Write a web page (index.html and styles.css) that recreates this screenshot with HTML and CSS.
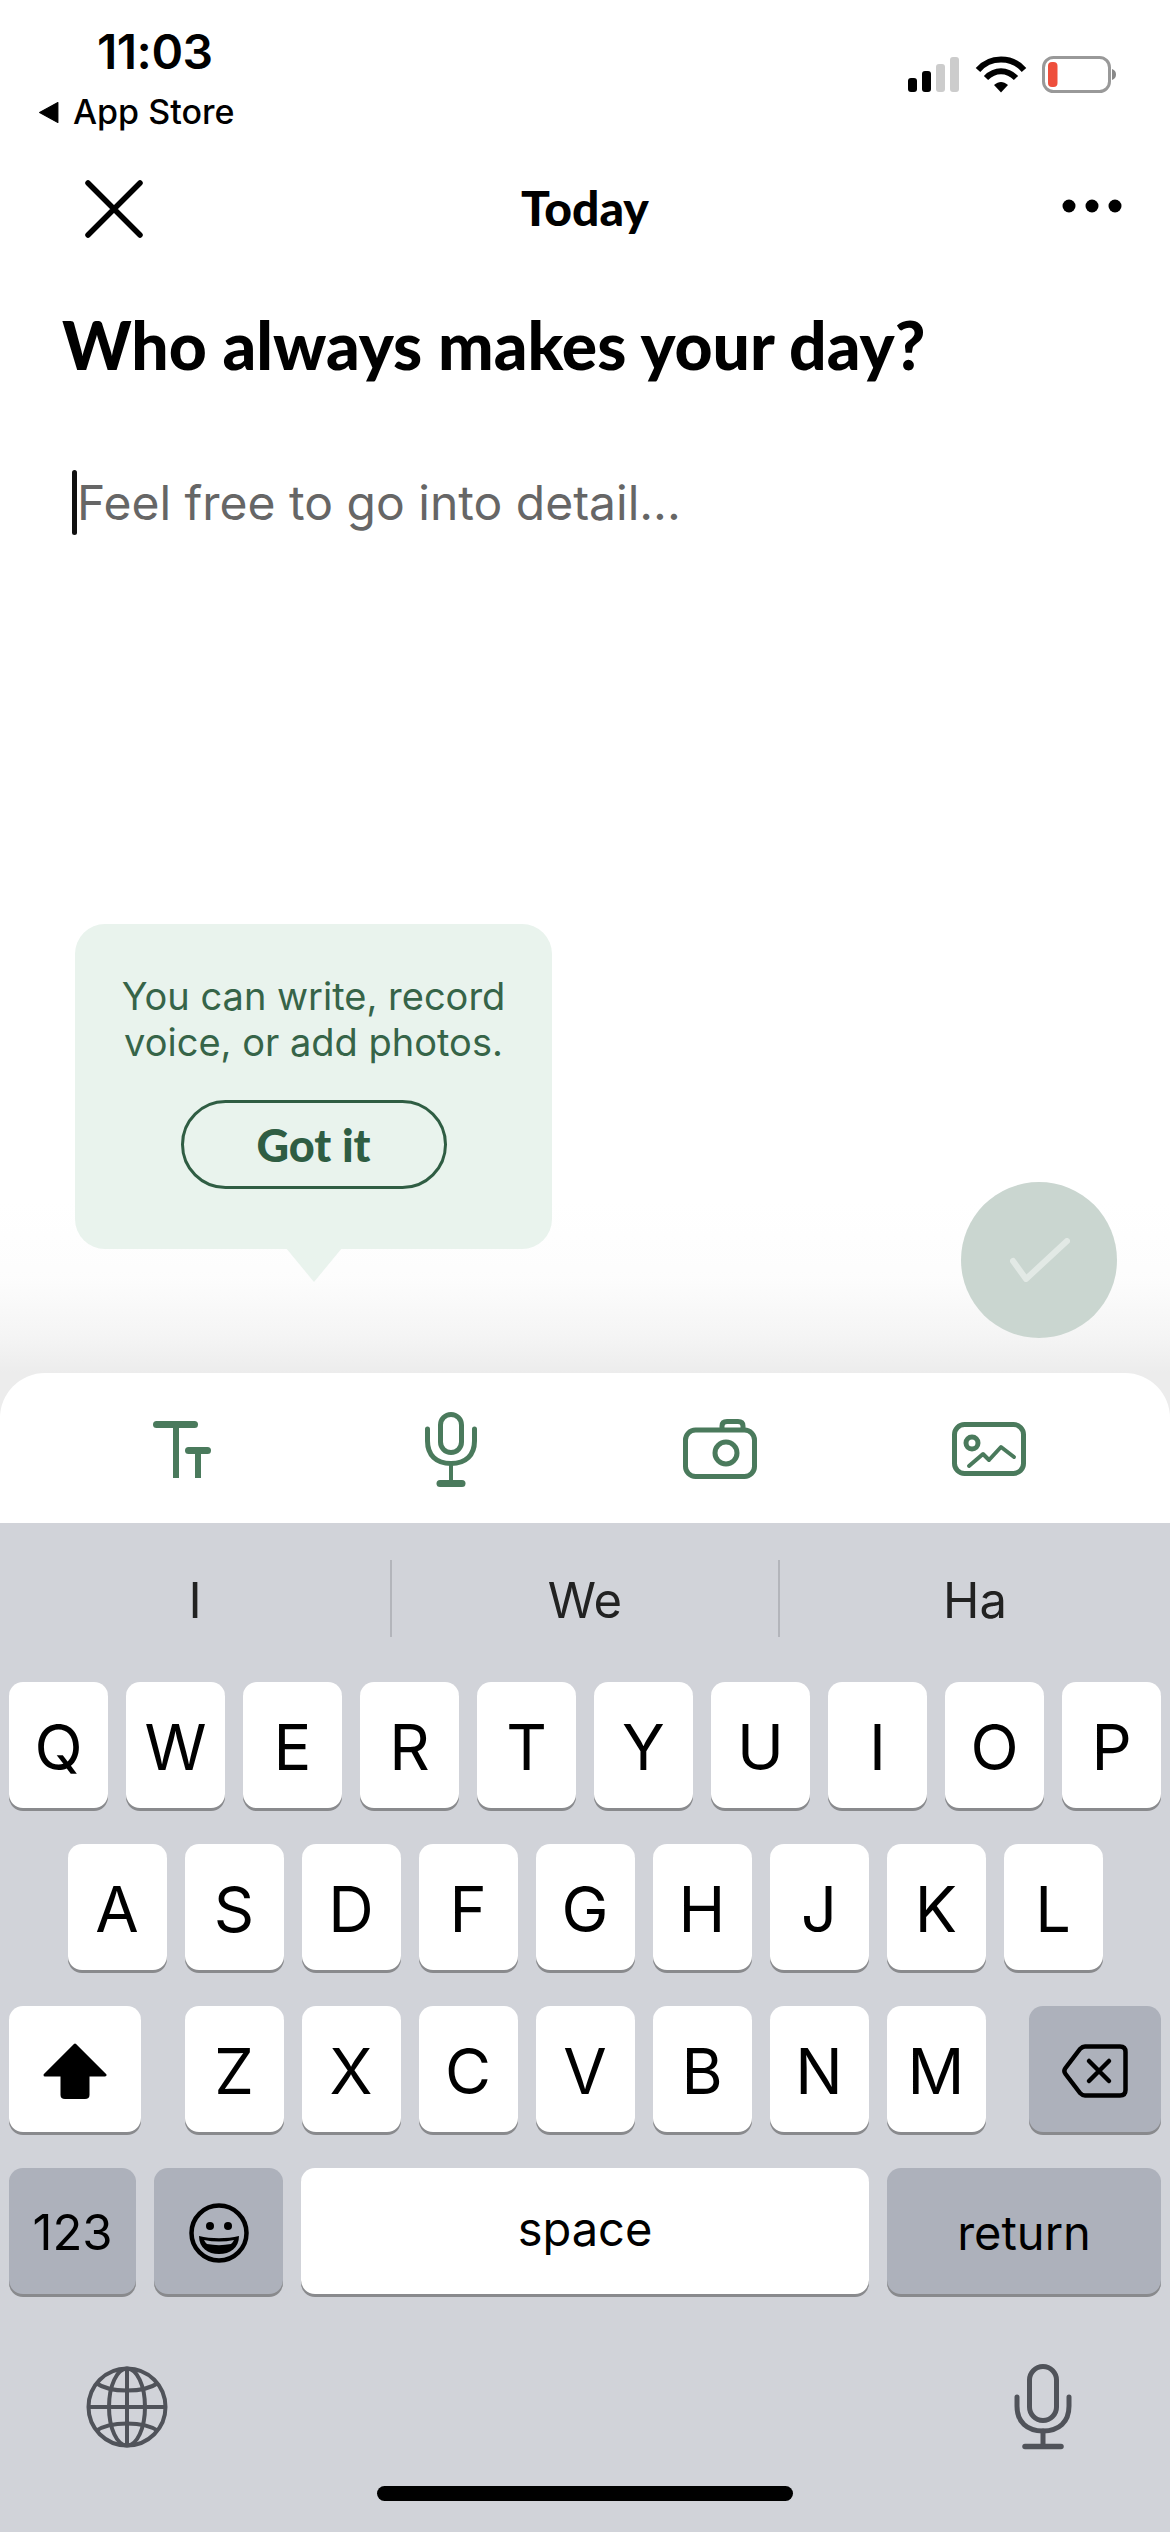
FILE: index.html
```html
<!DOCTYPE html>
<html lang="en">
<head>
<meta charset="utf-8">
<title>Today</title>
<link rel="stylesheet" href="styles.css">
</head>
<body>
<div class="phone">
  <header class="status">
    <div class="status-left">
      <div class="time">11:03</div>
      <div class="back"><svg class="back-tri" viewBox="0 0 20 22"><path d="M19 1.500V20.500L1.500 11Z" fill="#000" stroke="#000" stroke-width="1" stroke-linejoin="round"/></svg>App Store</div>
    </div>
    <svg class="status-icons" viewBox="0 0 208 40">
      <g>
        <rect x="0" y="22" width="9" height="14" rx="3" fill="#000"/>
        <rect x="14" y="15" width="9" height="21" rx="3" fill="#000"/>
        <rect x="28" y="8" width="9" height="28" rx="3" fill="#ccc"/>
        <rect x="42" y="1" width="9" height="35" rx="3" fill="#ccc"/>
      </g>
      <g fill="none" stroke="#000" stroke-width="6">
        <path d="M70 14C82 0 104 0 116 14"/>
        <path d="M78 22C87 13 99 13 108 22"/>
      </g>
      <path d="M86 29C91 25 95 25 100 29L93 36.500Z" fill="#000"/>
      <rect x="135.500" y="1.500" width="66" height="34" rx="10" fill="#fff" stroke="#999" stroke-width="3"/>
      <rect x="140" y="6" width="9.500" height="25" rx="4" fill="#ee4f3c"/>
      <path d="M204 13C207 14 208 16 208 18.500C208 21 207 23 204 24Z" fill="#888"/>
    </svg>
  </header>

  <nav class="nav">
    <svg class="nav-x" viewBox="0 0 58 58"><path d="M3 3L55 55M55 3L3 55" stroke="#000" stroke-width="5.500" stroke-linecap="round"/></svg>
    <div class="nav-title">Today</div>
    <svg class="nav-more" viewBox="0 0 60 14"><circle cx="7" cy="7" r="6.500"/><circle cx="30" cy="7" r="6.500"/><circle cx="53" cy="7" r="6.500"/></svg>
  </nav>

  <main class="main">
    <h1 class="prompt">Who always makes your day?</h1>
    <div class="entry"><span class="caret"></span><span class="placeholder">Feel free to go into detail...</span></div>

    <div class="tip">
      <p class="tip-text">You can write, record<br>voice, or add photos.</p>
      <button class="tip-btn">Got it</button>
    </div>

    <div class="done">
      <svg class="done-check" viewBox="0 0 60 44"><path d="M3 23L16 41L57 3" fill="none" stroke="#e2e9e5" stroke-width="6" stroke-linecap="round" stroke-linejoin="round"/></svg>
    </div>
  </main>

  <section class="tools">
    <div class="tool">
      <svg class="ic" width="58" height="57" viewBox="0 0 58 57"><g fill="none" stroke="#4a7a5c" stroke-width="6"><path d="M3.500 3.500H41.500" stroke-linecap="round" stroke-width="7"/><path d="M23 3.500V57"/><path d="M35.500 29.500H54.500" stroke-linecap="round" stroke-width="7"/><path d="M45 29.500V57"/></g></svg>
    </div>
    <div class="tool">
      <svg class="ic" width="52" height="75" viewBox="0 0 52 75"><g fill="none" stroke="#4a7a5c" stroke-width="5"><rect x="15.500" y="2.500" width="21" height="38" rx="10.500"/><path d="M2.500 17V29C2.500 43 11 51.500 26 51.500C41 51.500 49.500 43 49.500 29V17" stroke-linecap="round"/><path d="M26 51.500V71" stroke-width="4"/><path d="M15 71.500H37" stroke-width="7" stroke-linecap="round"/></g></svg>
    </div>
    <div class="tool">
      <svg class="ic" width="74" height="60" viewBox="0 0 74 60"><g fill="none" stroke="#4a7a5c" stroke-width="5"><rect x="2.500" y="11" width="69" height="46.500" rx="10"/><path d="M39 11V7C39 4 41 2.500 44 2.500H55C58 2.500 60 4 60 7V11"/><circle cx="43" cy="34" r="11"/></g></svg>
    </div>
    <div class="tool">
      <svg class="ic" width="74" height="54" viewBox="0 0 74 54"><g fill="none" stroke="#4a7a5c" stroke-width="5"><rect x="2.500" y="2.500" width="69" height="49" rx="10"/><ellipse cx="20" cy="21" rx="6" ry="6"/><path d="M17 44L31 32L37 38L49 25L62 35" stroke-width="4" stroke-linecap="round" stroke-linejoin="round"/></g></svg>
    </div>
  </section>

  <section class="kb">
    <div class="suggest">
      <div class="sug">I</div>
      <div class="sug sug-mid">We</div>
      <div class="sug">Ha</div>
    </div>
    <div class="rows">
      <div class="row">
        <div class="key">Q</div><div class="key">W</div><div class="key">E</div><div class="key">R</div><div class="key">T</div><div class="key">Y</div><div class="key">U</div><div class="key">I</div><div class="key">O</div><div class="key">P</div>
      </div>
      <div class="row">
        <div class="key">A</div><div class="key">S</div><div class="key">D</div><div class="key">F</div><div class="key">G</div><div class="key">H</div><div class="key">J</div><div class="key">K</div><div class="key">L</div>
      </div>
      <div class="row row-3">
        <div class="key key-wide">
          <svg width="64" height="56" viewBox="0 0 64 56"><path d="M32 2L62 32H45V52C45 53.500 44 54.500 42 54.500H22C20 54.500 19 53.500 19 52V32H2Z" fill="#000" stroke="#000" stroke-width="3" stroke-linejoin="round"/></svg>
        </div>
        <div class="letters">
          <div class="key">Z</div><div class="key">X</div><div class="key">C</div><div class="key">V</div><div class="key">B</div><div class="key">N</div><div class="key">M</div>
        </div>
        <div class="key key-wide key-gray">
          <svg width="66" height="54" viewBox="0 0 66 54"><g fill="none" stroke="#000" stroke-width="4.500" stroke-linecap="round" stroke-linejoin="round"><path d="M23 2.500H58C61.500 2.500 63.500 4.500 63.500 8V46C63.500 49.500 61.500 51.500 58 51.500H23C21 51.500 19.500 50.500 18 49L3.500 30C2 28 2 26 3.500 24L18 5C19.500 3.500 21 2.500 23 2.500Z"/><path d="M27 17L47 37M47 17L27 37"/></g></svg>
        </div>
      </div>
      <div class="row row-4">
        <div class="key key-gray key-123">123</div>
        <div class="key key-gray key-emoji">
          <svg width="60" height="60" viewBox="0 0 60 60"><circle cx="30" cy="30" r="27.500" fill="none" stroke="#000" stroke-width="4.500"/><circle cx="21" cy="23" r="4" fill="#000"/><circle cx="39" cy="23" r="4" fill="#000"/><path d="M10 33C22 36 38 36 50 33C50 45 41 51 30 51C19 51 10 45 10 33Z" fill="#000"/><path d="M15 37C25 39 35 39 45 37C44 39 43 40 42 41C34 42.500 26 42.500 18 41C17 40 16 39 15 37Z" fill="#adb1bb"/></svg>
        </div>
        <div class="key key-space">space</div>
        <div class="key key-gray key-return">return</div>
      </div>
    </div>
    <div class="kb-bottom">
      <svg width="82" height="82" viewBox="0 0 82 82"><g fill="none" stroke="#50535a" stroke-width="4"><circle cx="41" cy="41" r="38.500"/><ellipse cx="41" cy="41" rx="18" ry="38.500"/><path d="M41 2.500V79.500M2.500 41H79.500" /><path d="M10 17C24 27 58 27 72 17M10 65C24 55 58 55 72 65"/></g></svg>
      <svg width="58" height="86" viewBox="0 0 58 86"><g fill="none" stroke="#50535a" stroke-width="5" stroke-linecap="round"><rect x="15.500" y="2.500" width="27" height="54" rx="13.500"/><path d="M3 33V42C3 58 13 67 29 67C45 67 55 58 55 42V33"/><path d="M29 67V82"/><path d="M11 82.500H47" stroke-width="5.500"/></g></svg>
    </div>
    <div class="home-wrap"><div class="home"></div></div>
  </section>
</div>
</body>
</html>
```

FILE: styles.css
```css
* { box-sizing: border-box; }
html, body { margin: 0; padding: 0; background: #fff; }
body { font-family: "Inter", "Liberation Sans", sans-serif; color: #000; }
.phone { width: 1170px; height: 2532px; display: flex; flex-direction: column; overflow: hidden; background: #fff; }

.status { height: 150px; flex: none; display: flex; justify-content: space-between; padding: 26px 54px 0 38px; }
.status-left { display: flex; flex-direction: column; }
.time { font-size: 48px; font-weight: 600; line-height: 52px; margin-left: 59px; letter-spacing: -0.5px; }
.back { display: flex; align-items: center; gap: 14px; font-size: 34px; font-weight: 500; line-height: 40px; margin-top: 14px; }
.back-tri { width: 21px; height: 23px; }
.status-icons { width: 208px; height: 40px; margin-top: 30px; }

.nav { height: 122px; flex: none; display: grid; grid-template-columns: 1fr auto 1fr; align-items: center; padding: 0 48px 4px; position: relative; }
.nav-x { width: 58px; height: 58px; margin-left: 37px; }
.nav-title { font-family: "Lato", sans-serif; font-weight: 900; font-size: 48px; margin-bottom: 3px; }
.nav-more { width: 60px; height: 14px; margin-bottom: 6px; justify-self: end; }

.main { flex: 1; position: relative; padding: 35px 0 0 62px; margin-bottom: -45px; }
.main::after { content: ""; position: absolute; left: 0; right: 0; bottom: 0; height: 215px; background: linear-gradient(to bottom, rgba(236,236,236,0) 0, rgba(236,236,236,.12) 35%, rgba(236,236,236,.55) 62%, #ececec 79%); }
.prompt { margin: 0; font-family: "Lato", sans-serif; font-weight: 900; font-size: 66px; line-height: 76px; }
.entry { display: flex; align-items: center; margin: 87px 0 0 10px; height: 65px; }
.caret { width: 5px; height: 65px; background: #111; border-radius: 3px; }
.placeholder { font-size: 48px; color: #666; }

.tip { position: absolute; z-index: 1; left: 75px; top: 652px; width: 477px; height: 325px; background: #e9f3ed; border-radius: 30px; display: flex; flex-direction: column; align-items: center; padding-top: 49px; }
.tip::after { content: ""; position: absolute; left: 211px; bottom: -33px; border-left: 28px solid transparent; border-right: 28px solid transparent; border-top: 34px solid #e9f3ed; }
.tip-text { margin: 0; font-size: 38px; line-height: 46px; color: #366448; text-align: center; }
.tip-btn { margin-top: 35px; width: 266px; height: 89px; border-radius: 45px; border: 3px solid #2f5d43; background: transparent; font-family: "Lato", sans-serif; font-weight: 900; font-size: 45px; color: #2f5d43; }

.done { position: absolute; z-index: 1; left: 961px; top: 910px; width: 156px; height: 156px; border-radius: 50%; background: #cad6d0; display: flex; align-items: center; justify-content: center; }
.done-check { width: 60px; height: 44px; margin-left: 2px; }

.tools { position: relative; z-index: 2; flex: none; height: 150px; display: grid; grid-template-columns: repeat(4, 269px); padding: 2px 47px 0; background: #fff; border-radius: 45px 45px 0 0; }
.tool { display: flex; align-items: center; justify-content: center; }

.kb { flex: none; height: 1009px; background: #d1d3d9; display: flex; flex-direction: column; }
.suggest { height: 159px; flex: none; display: grid; grid-template-columns: 390px 390px 390px; padding-top: 37px; align-items: start; }
.sug { height: 77px; display: flex; align-items: center; justify-content: center; padding-top: 4px; font-size: 49px; color: #222; }
.sug-mid { border-left: 2px solid #b3b5bb; border-right: 2px solid #b3b5bb; }
.rows { display: flex; flex-direction: column; gap: 36px; padding: 0 9px; flex: none; }
.row { display: flex; justify-content: center; gap: 18px; height: 126px; }
.row-3 { justify-content: space-between; }
.letters { display: flex; gap: 18px; }
.key { width: 99px; height: 126px; border-radius: 14px; background: #fff; box-shadow: 0 3px 0 #898a8d; display: flex; align-items: center; justify-content: center; padding-top: 3px; font-size: 63px; color: #000; flex: none; }
.key-wide { width: 132px; }
.key-gray { background: #adb1bb; }
.key-123 { width: 127px; font-size: 49px; }
.key-emoji { width: 129px; }
.key-space { width: 568px; font-size: 47px; padding: 0 0 6px; }
.key-return { width: 274px; font-size: 47px; }
.kb-bottom { display: flex; justify-content: space-between; align-items: center; padding: 71px 98px 0 86px; height: 155px; flex: none; }
.home-wrap { display: flex; justify-content: center; padding-top: 37px; }
.home { width: 416px; height: 15px; border-radius: 8px; background: #000; }
```
